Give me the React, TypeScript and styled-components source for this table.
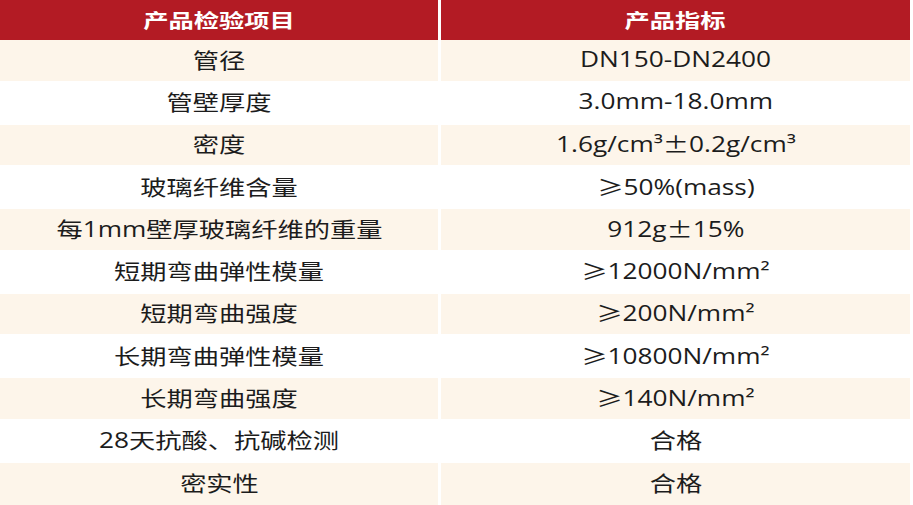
import React from 'react';
import styled, { createGlobalStyle } from 'styled-components';

type Spec = {
  item: string;
  value: string;
};

const specs: Spec[] = [
  { item: '管径', value: 'DN150-DN2400' },
  { item: '管壁厚度', value: '3.0mm-18.0mm' },
  { item: '密度', value: '1.6g/cm³±0.2g/cm³' },
  { item: '玻璃纤维含量', value: '≥50%(mass)' },
  { item: '每1mm壁厚玻璃纤维的重量', value: '912g±15%' },
  { item: '短期弯曲弹性模量', value: '≥12000N/mm²' },
  { item: '短期弯曲强度', value: '≥200N/mm²' },
  { item: '长期弯曲弹性模量', value: '≥10800N/mm²' },
  { item: '长期弯曲强度', value: '≥140N/mm²' },
  { item: '28天抗酸、抗碱检测', value: '合格' },
  { item: '密实性', value: '合格' },
];

const GlobalStyle = createGlobalStyle`
  html, body {
    margin: 0;
    padding: 0;
    background: #ffffff;
  }
  body {
    font-family: "Open Sans", "Noto Sans CJK SC", sans-serif;
    overflow: hidden;
  }
`;

const Table = styled.div`
  display: flex;
  flex-direction: column;
  width: 910px;
  height: 505px;
  background: #ffffff;
`;

const Row = styled.div<{ $height: number }>`
  display: grid;
  grid-template-columns: 438px 469px;
  column-gap: 3px;
  flex: none;
  height: ${props => props.$height}px;

  &:last-child {
    flex: 1;
  }
`;

const HeadCell = styled.div`
  display: flex;
  align-items: center;
  justify-content: center;
  background: #b31b24;
  color: #ffffff;
  font-size: 19px;
  font-weight: 700;
`;

const Cell = styled.div<{ $shaded: boolean }>`
  display: flex;
  align-items: center;
  justify-content: center;
  padding-bottom: 3px;
  box-sizing: border-box;
  background: ${props => (props.$shaded ? '#fdf5ea' : '#ffffff')};
  color: #1c1c1c;
  font-size: 21px;
`;

const Label = styled.span<{ $stretch: number }>`
  display: inline-block;
  white-space: nowrap;
  transform: scaleX(${props => props.$stretch});
`;

// ± and ≥ are set in the CJK face, where they are wide
const Sym = styled.span`
  font-family: "Noto Sans CJK SC", sans-serif;
`;

const withSymbols = (text: string) =>
  text.split(/([±≥])/).map((part, i) =>
    part === '±' || part === '≥' ? <Sym key={i}>{part}</Sym> : part
  );

const App = () => {
  return (
    <>
      <GlobalStyle />
      <Table>
        <Row $height={40}>
          <HeadCell>
            <Label $stretch={1.33}>产品检验项目</Label>
          </HeadCell>
          <HeadCell>
            <Label $stretch={1.33}>产品指标</Label>
          </HeadCell>
        </Row>
        {specs.map((spec, i) => {
          const shaded = i % 2 === 0;
          return (
            <Row key={spec.item} $height={shaded ? 40.5 : 44}>
              <Cell $shaded={shaded}>
                <Label $stretch={1.25}>{spec.item}</Label>
              </Cell>
              <Cell $shaded={shaded}>
                <Label $stretch={1.25}>{withSymbols(spec.value)}</Label>
              </Cell>
            </Row>
          );
        })}
      </Table>
    </>
  );
};

export default App;
